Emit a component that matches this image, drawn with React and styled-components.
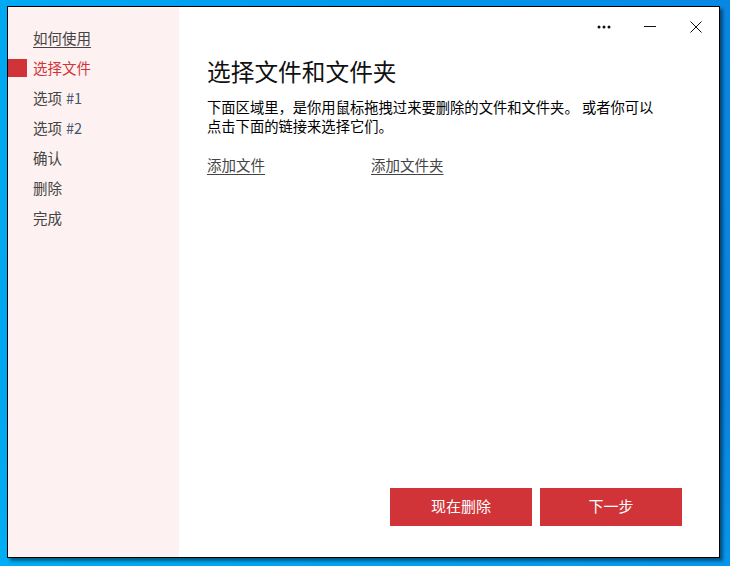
import React from "react";
import styled, { createGlobalStyle } from "styled-components";

const Global = createGlobalStyle`
  html, body { margin: 0; padding: 0; }
  body {
    width: 730px;
    height: 566px;
    overflow: hidden;
    background: linear-gradient(100deg, #00a9f2 0%, #0396ea 55%, #0a82df 100%);
    font-family: "Noto Sans CJK SC", "Noto Sans", sans-serif;
  }
`;

const Desktop = styled.div`
  width: 730px;
  height: 566px;
  padding: 6px 0 0 7px;
  box-sizing: border-box;
  background: linear-gradient(180deg, rgba(0,0,0,0) 70%, rgba(0,190,255,0.35) 100%);
`;

const Window = styled.div`
  width: 713px;
  height: 552px;
  box-sizing: border-box;
  border: 1px solid #000;
  background: #fff;
  display: flex;
  box-shadow: 3px 3px 3px rgba(0, 0, 0, 0.45);
`;

const Sidebar = styled.nav`
  width: 171px;
  flex: none;
  background: #fdf1f1;
  padding-top: 15px;
  display: flex;
  flex-direction: column;
`;

const NavItem = styled.div`
  position: relative;
  height: 30px;
  display: flex;
  align-items: center;
  padding-left: 25px;
  font-size: 14.5px;
  color: ${(p) => (p.$active ? "#d13438" : "#444")};
  text-decoration: ${(p) => (p.$link ? "underline" : "none")};
  text-underline-offset: 3px;
  &::before {
    content: "";
    display: ${(p) => (p.$active ? "block" : "none")};
    position: absolute;
    left: 0;
    top: 7px;
    width: 19px;
    height: 18px;
    background: #d13438;
  }
`;

const Num = styled.span`
  color: #44556e;
  margin-left: 4px;
`;

const Main = styled.main`
  flex: 1;
  display: flex;
  flex-direction: column;
  min-width: 0;
`;

const TitleBar = styled.div`
  height: 40px;
  display: flex;
  justify-content: flex-end;
`;

const TitleButton = styled.div`
  width: 46px;
  height: 40px;
  display: flex;
  align-items: center;
  justify-content: center;
  color: #111;
`;

const Content = styled.div`
  flex: 1;
  display: flex;
  flex-direction: column;
  padding: 8px 37px 31px 28px;
`;

const Title = styled.h1`
  margin: 0;
  font-size: 23.7px;
  font-weight: 400;
  line-height: 32px;
  color: #111;
`;

const Desc = styled.p`
  margin: 10px 0 0;
  font-size: 14.3px;
  line-height: 19px;
  color: #000;
`;

const Links = styled.div`
  margin-top: 20px;
  display: flex;
`;

const LinkText = styled.a`
  width: 164px;
  font-size: 14.5px;
  line-height: 20px;
  color: #444;
  text-decoration: underline;
  text-underline-offset: 3px;
  cursor: pointer;
`;

const Spacer = styled.div`
  flex: 1;
`;

const Buttons = styled.div`
  display: flex;
  justify-content: flex-end;
  gap: 8px;
`;

const Button = styled.button`
  width: 142px;
  height: 38px;
  border: none;
  background: #d13438;
  color: #fff;
  font-family: inherit;
  font-size: 15px;
  padding: 0 0 3px;
`;

export default function App() {
  return (
    <>
      <Global />
      <Desktop>
        <Window>
          <Sidebar>
            <NavItem $link>如何使用</NavItem>
            <NavItem $active>选择文件</NavItem>
            <NavItem>选项<Num>#1</Num></NavItem>
            <NavItem>选项<Num>#2</Num></NavItem>
            <NavItem>确认</NavItem>
            <NavItem>删除</NavItem>
            <NavItem>完成</NavItem>
          </Sidebar>
          <Main>
            <TitleBar>
              <TitleButton>
                <svg width="14" height="4" viewBox="0 0 14 4">
                  <circle cx="2" cy="2" r="1.5" fill="#111" />
                  <circle cx="7" cy="2" r="1.5" fill="#111" />
                  <circle cx="12" cy="2" r="1.5" fill="#111" />
                </svg>
              </TitleButton>
              <TitleButton>
                <svg width="12" height="2" viewBox="0 0 12 2">
                  <rect x="0" y="0" width="12" height="1" fill="#111" />
                </svg>
              </TitleButton>
              <TitleButton>
                <svg width="12" height="12" viewBox="0 0 12 12">
                  <path d="M0.5 0.5 L11.5 11.5 M11.5 0.5 L0.5 11.5" stroke="#111" strokeWidth="1" />
                </svg>
              </TitleButton>
            </TitleBar>
            <Content>
              <Title>选择文件和文件夹</Title>
              <Desc>
                下面区域里，是你用鼠标拖拽过来要删除的文件和文件夹。 或者你可以
                <br />
                点击下面的链接来选择它们。
              </Desc>
              <Links>
                <LinkText>添加文件</LinkText>
                <LinkText>添加文件夹</LinkText>
              </Links>
              <Spacer />
              <Buttons>
                <Button>现在删除</Button>
                <Button>下一步</Button>
              </Buttons>
            </Content>
          </Main>
        </Window>
      </Desktop>
    </>
  );
}
